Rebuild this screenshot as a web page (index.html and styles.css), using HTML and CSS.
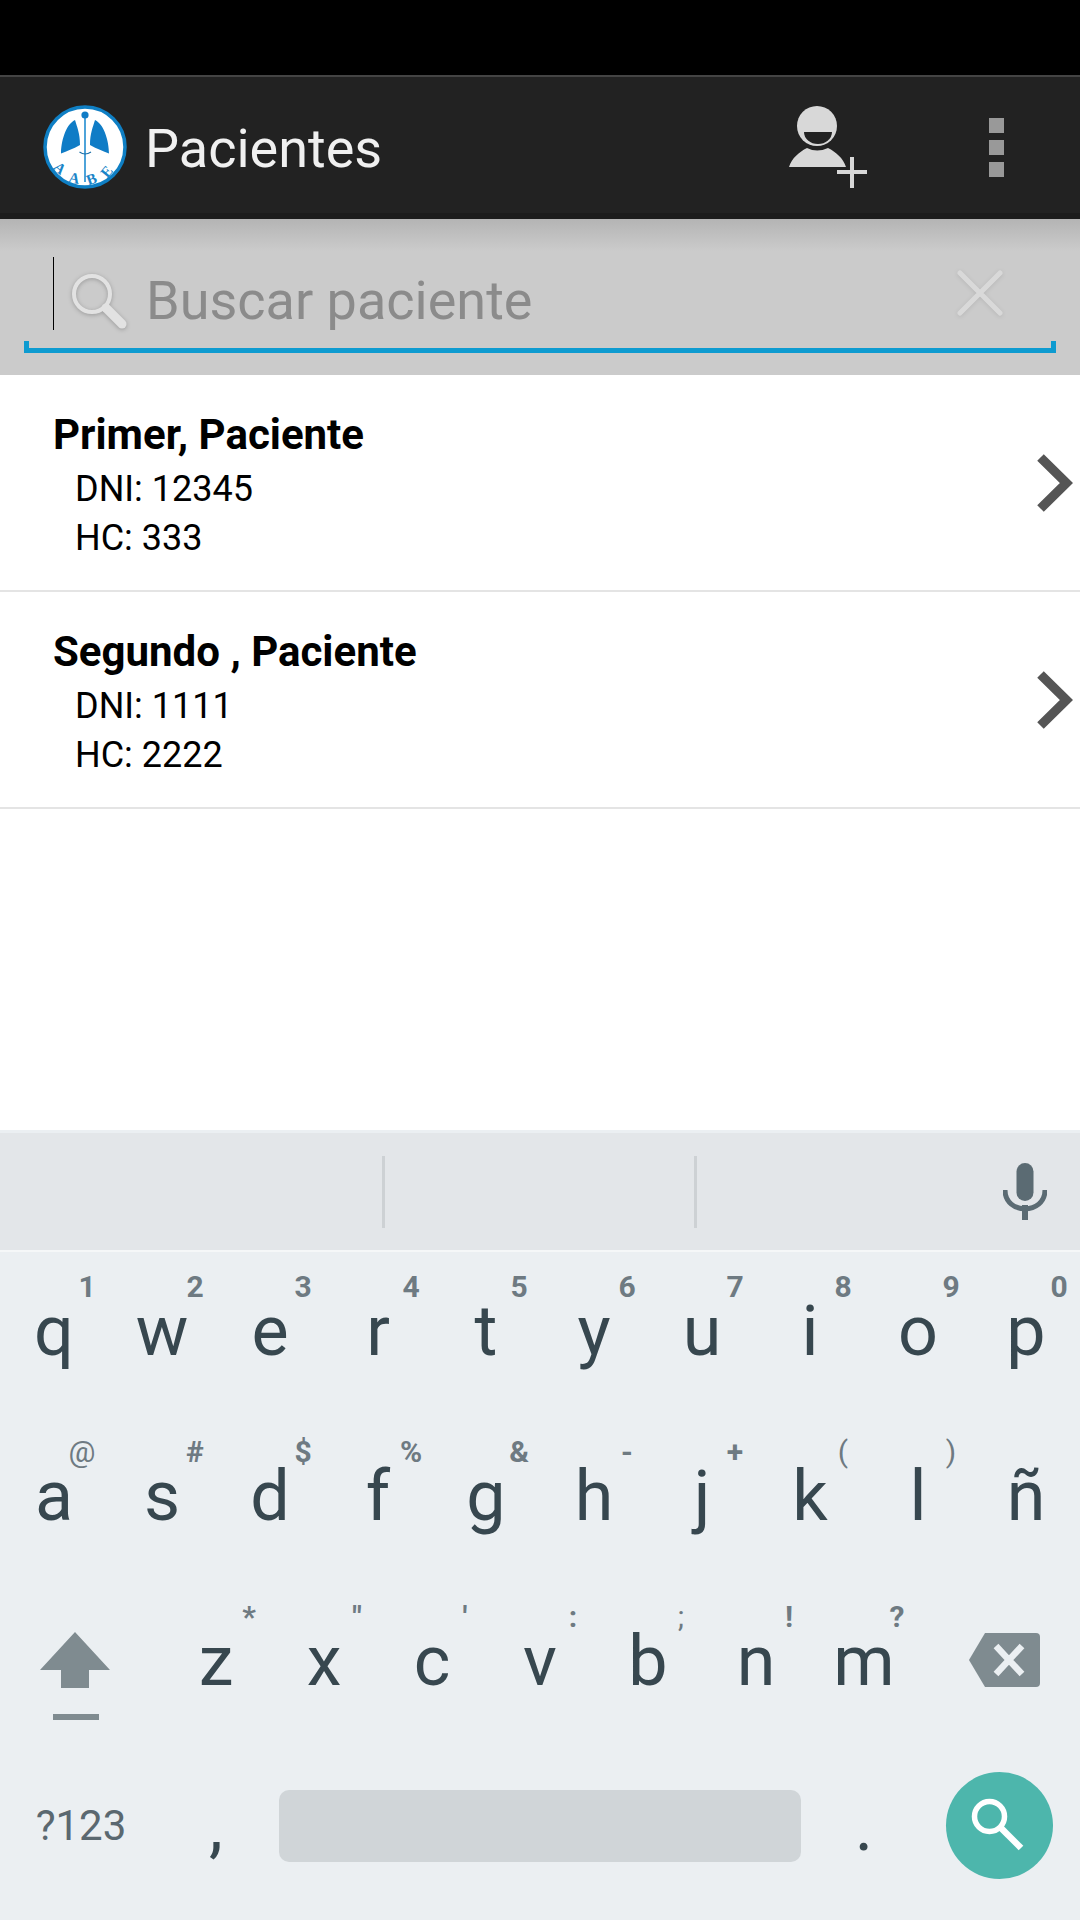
FILE: index.html
```html
<!DOCTYPE html>
<html lang="es">
<head>
    <meta charset="UTF-8">
    <meta name="viewport" content="width=device-width, initial-scale=1.0">
    <title>Pacientes</title>
    <link rel="stylesheet" href="styles.css">
</head>
<body>
    <div class="status-bar"></div>

    <header class="app-bar">
        <svg class="logo" viewBox="0 0 84 84">
            <defs><path id="logoArc" d="M4.5 42 A37.5 37.5 0 0 0 79.5 42"/></defs>
            <circle cx="42" cy="42" r="40" fill="#fff" stroke="#0f7fc4" stroke-width="3.5"/>
            <path d="M32 15 C34 22 37 28 37 40 C30 44 24 46 18 48.5 C18 38 22 20 32 15Z" fill="#0f7cc6"/>
            <path d="M52 15 C50 22 47 28 47 40 C54 44 60 46 66 48.5 C66 38 62 20 52 15Z" fill="#0f7cc6"/>
            <path d="M42 10 V77" stroke="#3a9ad6" stroke-width="1.8"/>
            <circle cx="42" cy="10" r="3.6" fill="#0f7cc6"/>
            <path d="M36.5 47 Q42 51 48 47" fill="none" stroke="#1a6fa8" stroke-width="1.2"/>
            <text class="logo-text"><textPath href="#logoArc" startOffset="52%" text-anchor="middle">AABE</textPath></text>
        </svg>
        <h1 class="app-title">Pacientes</h1>
        <svg class="add-icon" viewBox="0 0 78 82">
            <circle cx="28" cy="20" r="20" fill="#d8d8d8"/>
            <path d="M15 26 H43 A14 12 0 0 1 15 26Z" fill="#222"/>
            <path d="M0 61 C3 52 10 46 18 42 Q28 47 39 42 C47 46 54 52 57 61Z" fill="#d8d8d8"/>
            <path d="M48 64 H78 V68 H48Z M61 51 H65 V82 H61Z" fill="#d8d8d8"/>
        </svg>
        <div class="overflow-icon"><span></span><span></span><span></span></div>
    </header>

    <section class="search-bar">
        <div class="search-field">
            <span class="caret"></span>
            <svg class="lens-icon" viewBox="0 0 58 58">
                <circle cx="22" cy="22" r="18" fill="none" stroke="#e2e2e2" stroke-width="4"/>
                <path d="M36 36 L52 52" stroke="#e2e2e2" stroke-width="9" stroke-linecap="round"/>
            </svg>
            <span class="placeholder">Buscar paciente</span>
            <svg class="clear-icon" viewBox="0 0 46 46">
                <path d="M3 3 L43 43 M43 3 L3 43" stroke="#d9d9d9" stroke-width="5" stroke-linecap="round"/>
            </svg>
        </div>
    </section>

    <main class="patient-list">
        <div class="patient-row">
            <div class="patient-info">
                <div class="patient-name">Primer, Paciente</div>
                <div class="patient-detail">DNI: 12345</div>
                <div class="patient-detail">HC: 333</div>
            </div>
            <svg class="chevron" viewBox="0 0 36 58">
                <path d="M3.5 3.5 L29.4 29 L3.5 54.5" fill="none" stroke="#555" stroke-width="9.3"/>
            </svg>
        </div>
        <div class="patient-row">
            <div class="patient-info">
                <div class="patient-name">Segundo , Paciente</div>
                <div class="patient-detail">DNI: 1111</div>
                <div class="patient-detail">HC: 2222</div>
            </div>
            <svg class="chevron" viewBox="0 0 36 58">
                <path d="M3.5 3.5 L29.4 29 L3.5 54.5" fill="none" stroke="#555" stroke-width="9.3"/>
            </svg>
        </div>
    </main>

    <div class="keyboard">
        <div class="suggestions">
            <span class="suggestion-cell first"></span>
            <span class="suggestion-sep"></span>
            <span class="suggestion-cell"></span>
            <span class="suggestion-sep"></span>
            <svg class="mic-icon" viewBox="0 0 44 58">
                <rect x="13.5" y="0" width="17" height="38" rx="8.5" fill="#5b6b73"/>
                <path d="M2 27 C2 52 42 52 42 27" fill="none" stroke="#5b6b73" stroke-width="5"/>
                <rect x="19" y="42" width="6" height="15" fill="#5b6b73"/>
            </svg>
        </div>

        <div class="key-row">
            <div class="key">q<span class="hint">1</span></div>
            <div class="key">w<span class="hint">2</span></div>
            <div class="key">e<span class="hint">3</span></div>
            <div class="key">r<span class="hint">4</span></div>
            <div class="key">t<span class="hint">5</span></div>
            <div class="key">y<span class="hint">6</span></div>
            <div class="key">u<span class="hint">7</span></div>
            <div class="key">i<span class="hint">8</span></div>
            <div class="key">o<span class="hint">9</span></div>
            <div class="key">p<span class="hint">0</span></div>
        </div>
        <div class="key-row">
            <div class="key">a<span class="hint light at">@</span></div>
            <div class="key">s<span class="hint">#</span></div>
            <div class="key">d<span class="hint">$</span></div>
            <div class="key">f<span class="hint">%</span></div>
            <div class="key">g<span class="hint">&amp;</span></div>
            <div class="key">h<span class="hint">-</span></div>
            <div class="key">j<span class="hint">+</span></div>
            <div class="key">k<span class="hint light">(</span></div>
            <div class="key">l<span class="hint light">)</span></div>
            <div class="key">ñ</div>
        </div>
        <div class="key-row">
            <div class="key wide">
                <svg class="shift-icon" viewBox="0 0 70 88">
                    <path d="M35 0 L70 38 H49 V56 H21 V38 H0Z" fill="#7f8b90"/>
                    <rect x="13" y="82" width="46" height="6" fill="#7f8b90"/>
                </svg>
            </div>
            <div class="key">z<span class="hint">*</span></div>
            <div class="key">x<span class="hint">"</span></div>
            <div class="key">c<span class="hint">'</span></div>
            <div class="key">v<span class="hint">:</span></div>
            <div class="key">b<span class="hint light">;</span></div>
            <div class="key">n<span class="hint">!</span></div>
            <div class="key">m<span class="hint">?</span></div>
            <div class="key wide">
                <svg class="backspace-icon" viewBox="0 0 71 54">
                    <path d="M16 0 H67 Q71 0 71 4 V50 Q71 54 67 54 H16 L0 27Z" fill="#7f8b90"/>
                    <path d="M27 13 L53 41 M53 13 L27 41" stroke="#ebeff2" stroke-width="6.5"/>
                </svg>
            </div>
        </div>
        <div class="key-row">
            <div class="key wide symbols">?123</div>
            <div class="key">,</div>
            <div class="key space"><span class="space-bar"></span></div>
            <div class="key">.</div>
            <div class="key wide">
                <span class="enter-key">
                    <svg viewBox="0 0 64 64">
                        <circle cx="22.5" cy="22.5" r="15" fill="none" stroke="#fff" stroke-width="5.5"/>
                        <path d="M33 33 L54 54" stroke="#fff" stroke-width="6.5"/>
                    </svg>
                </span>
            </div>
        </div>
    </div>
</body>
</html>
```

FILE: styles.css
```css
* {
    margin: 0;
    padding: 0;
    box-sizing: border-box;
}

body {
    font-family: Roboto, "Noto Sans", sans-serif;
    width: 1080px;
    height: 1920px;
    display: flex;
    flex-direction: column;
    background: white;
    overflow: hidden;
}

.status-bar {
    height: 75px;
    background: #000;
}

.app-bar {
    height: 144px;
    display: flex;
    align-items: center;
    padding: 4px 0 0 43px;
    background: #222;
    border-top: 2px solid #444;
    border-bottom: 6px solid #1c1c1c;
}

.logo {
    width: 84px;
    height: 84px;
    flex: none;
}

.logo-text {
    font-family: "Liberation Serif", serif;
    font-size: 15px;
    font-weight: bold;
    letter-spacing: 9.5px;
    fill: #1a85c8;
}

.app-title {
    margin: 3px 0 0 18px;
    font-size: 54px;
    font-weight: 400;
    color: #f0f0f0;
}

.add-icon {
    width: 78px;
    height: 82px;
    margin-left: auto;
    flex: none;
}

.overflow-icon {
    width: 15px;
    margin: 0 76px 0 122px;
    display: flex;
    flex-direction: column;
    gap: 7px;
}

.overflow-icon span {
    height: 15px;
    background: #999;
}

.search-bar {
    height: 156px;
    padding: 31px 24px 0;
    background: linear-gradient(#b4b4b4 0, #cbcbcb 32px);
}

.search-field {
    position: relative;
    height: 103px;
    display: flex;
    align-items: flex-start;
    border-bottom: 5px solid #0e9bd0;
}

.search-field::before,
.search-field::after {
    content: "";
    position: absolute;
    bottom: 0;
    width: 5px;
    height: 7px;
    background: #0e9bd0;
}

.search-field::before {
    left: 0;
}

.search-field::after {
    right: 0;
}

.caret {
    width: 1px;
    height: 73px;
    margin: 7px 0 0 29px;
    background: #000;
}

.lens-icon {
    width: 58px;
    height: 58px;
    margin: 22px 0 0 16px;
    flex: none;
    filter: drop-shadow(0 1px 2px rgba(0, 0, 0, 0.25));
}

.placeholder {
    margin: 21px 0 0 18px;
    font-size: 54px;
    line-height: 60px;
    color: #8b8b8b;
}

.clear-icon {
    width: 46px;
    height: 46px;
    margin: 20px 53px 0 auto;
    flex: none;
    filter: drop-shadow(0 1px 2px rgba(0, 0, 0, 0.1));
}

.patient-list {
    flex: 1;
}

.patient-row {
    height: 217px;
    display: flex;
    align-items: center;
    justify-content: space-between;
    padding: 0 7px 0 53px;
    border-bottom: 2px solid #e4e4e4;
}

.patient-info {
    padding-top: 7px;
}

.patient-name {
    font-size: 42px;
    line-height: 50px;
    font-weight: bold;
    color: #000;
    margin-bottom: 5px;
}

.patient-detail {
    font-size: 36px;
    line-height: 49px;
    color: #000;
    padding-left: 22px;
}

.chevron {
    width: 36px;
    height: 58px;
}

.keyboard {
    height: 790px;
    background: #ebeff2;
    padding-top: 3px;
}

.suggestions {
    height: 119px;
    display: flex;
    align-items: center;
    background: #e3e6e9;
    border-bottom: 2px solid #f5f7f8;
}

.suggestion-cell {
    width: 309px;
}

.suggestion-cell.first {
    width: 382px;
}

.suggestion-sep {
    width: 3px;
    height: 72px;
    background: #cdd1d4;
}

.mic-icon {
    width: 44px;
    height: 58px;
    margin-left: auto;
    margin-right: 33px;
}

.key-row {
    height: 165px;
    display: flex;
}

.key {
    position: relative;
    width: 108px;
    padding-bottom: 8px;
    display: flex;
    align-items: center;
    justify-content: center;
    font-size: 70px;
    color: #37474f;
}

.key.wide {
    width: 162px;
}

.key.space {
    width: 540px;
}

.hint {
    position: absolute;
    top: 20px;
    left: 67px;
    width: 40px;
    text-align: center;
    font-size: 30px;
    line-height: 30px;
    font-weight: 700;
    color: #6e7a82;
}

.hint.light {
    font-weight: 400;
}

.hint.at {
    left: 62px;
}

.shift-icon {
    width: 70px;
    height: 88px;
    margin: 30px 12px 0 0;
}

.backspace-icon {
    width: 71px;
    height: 54px;
    margin: 0 0 2px 10px;
}

.symbols {
    font-size: 42px;
    color: #5a6870;
}

.space-bar {
    width: 522px;
    height: 72px;
    border-radius: 10px;
    background: #d0d5d8;
}

.enter-key {
    width: 107px;
    height: 107px;
    display: flex;
    align-items: center;
    justify-content: center;
    border-radius: 50%;
    background: #4db6ac;
}

.enter-key svg {
    width: 64px;
    height: 64px;
}
```
